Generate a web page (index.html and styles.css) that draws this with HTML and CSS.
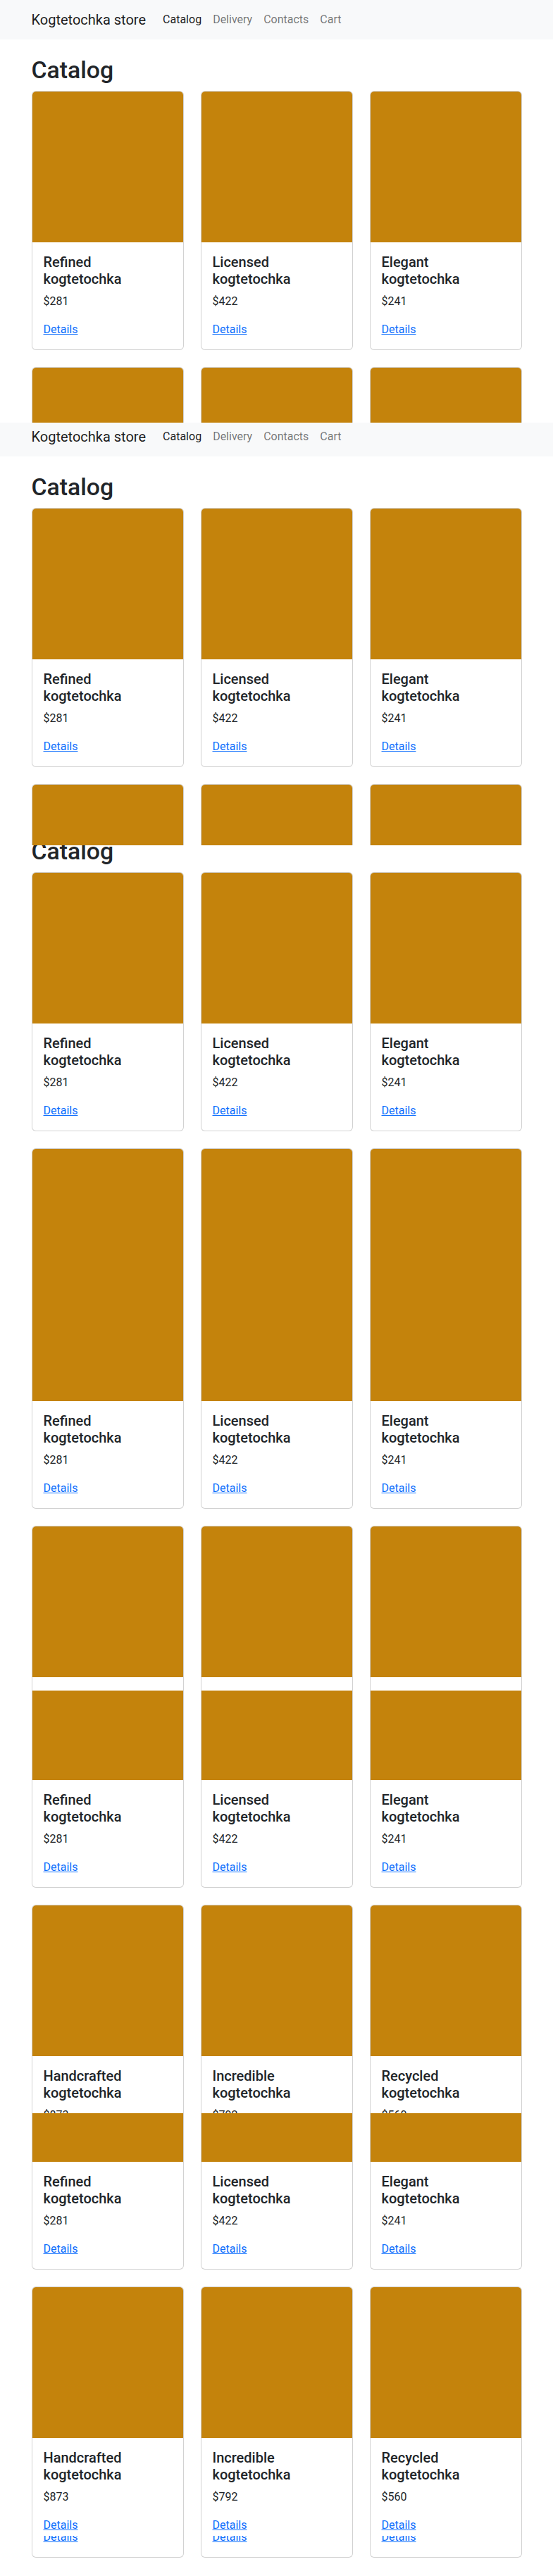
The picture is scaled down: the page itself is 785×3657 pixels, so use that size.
FILE: index.html
```html
<!DOCTYPE html>
<html lang="en">
<head>
<meta charset="utf-8">
<title>Kogtetochka store</title>
<link rel="stylesheet" href="styles.css">
</head>
<body>

<!-- capture 1 -->
<div class="shot shot--600">
  <nav class="navbar">
    <div class="container navbar-inner">
      <a class="brand" href="#">Kogtetochka store</a>
      <ul class="nav">
        <li><a class="nav-link nav-link--active" href="#">Catalog</a></li>
        <li><a class="nav-link" href="#">Delivery</a></li>
        <li><a class="nav-link" href="#">Contacts</a></li>
        <li><a class="nav-link" href="#">Cart</a></li>
      </ul>
    </div>
  </nav>
  <main class="container main">
    <h1 class="page-title">Catalog</h1>
    <div class="grid">
      <div class="card"><div class="card-img"></div><div class="card-body"><h5 class="card-title">Refined kogtetochka</h5><p class="card-text">$281</p><a class="card-link" href="#">Details</a></div></div>
      <div class="card"><div class="card-img"></div><div class="card-body"><h5 class="card-title">Licensed kogtetochka</h5><p class="card-text">$422</p><a class="card-link" href="#">Details</a></div></div>
      <div class="card"><div class="card-img"></div><div class="card-body"><h5 class="card-title">Elegant kogtetochka</h5><p class="card-text">$241</p><a class="card-link" href="#">Details</a></div></div>
      <div class="card"><div class="card-img"></div><div class="card-body"><h5 class="card-title">Handcrafted kogtetochka</h5><p class="card-text">$873</p><a class="card-link" href="#">Details</a></div></div>
      <div class="card"><div class="card-img"></div><div class="card-body"><h5 class="card-title">Incredible kogtetochka</h5><p class="card-text">$792</p><a class="card-link" href="#">Details</a></div></div>
      <div class="card"><div class="card-img"></div><div class="card-body"><h5 class="card-title">Recycled kogtetochka</h5><p class="card-text">$560</p><a class="card-link" href="#">Details</a></div></div>
    </div>
  </main>
</div>

<!-- capture 2 -->
<div class="shot shot--600">
  <div class="page page--b">
    <nav class="navbar">
      <div class="container navbar-inner">
        <a class="brand" href="#">Kogtetochka store</a>
        <ul class="nav">
          <li><a class="nav-link nav-link--active" href="#">Catalog</a></li>
          <li><a class="nav-link" href="#">Delivery</a></li>
          <li><a class="nav-link" href="#">Contacts</a></li>
          <li><a class="nav-link" href="#">Cart</a></li>
        </ul>
      </div>
    </nav>
    <main class="container main">
      <h1 class="page-title">Catalog</h1>
      <div class="grid">
        <div class="card"><div class="card-img"></div><div class="card-body"><h5 class="card-title">Refined kogtetochka</h5><p class="card-text">$281</p><a class="card-link" href="#">Details</a></div></div>
        <div class="card"><div class="card-img"></div><div class="card-body"><h5 class="card-title">Licensed kogtetochka</h5><p class="card-text">$422</p><a class="card-link" href="#">Details</a></div></div>
        <div class="card"><div class="card-img"></div><div class="card-body"><h5 class="card-title">Elegant kogtetochka</h5><p class="card-text">$241</p><a class="card-link" href="#">Details</a></div></div>
        <div class="card"><div class="card-img"></div><div class="card-body"><h5 class="card-title">Handcrafted kogtetochka</h5><p class="card-text">$873</p><a class="card-link" href="#">Details</a></div></div>
        <div class="card"><div class="card-img"></div><div class="card-body"><h5 class="card-title">Incredible kogtetochka</h5><p class="card-text">$792</p><a class="card-link" href="#">Details</a></div></div>
        <div class="card"><div class="card-img"></div><div class="card-body"><h5 class="card-title">Recycled kogtetochka</h5><p class="card-text">$560</p><a class="card-link" href="#">Details</a></div></div>
      </div>
    </main>
  </div>
</div>

<!-- capture 3 -->
<div class="shot shot--1200">
  <div class="page page--c">
    <nav class="navbar">
      <div class="container navbar-inner">
        <a class="brand" href="#">Kogtetochka store</a>
        <ul class="nav">
          <li><a class="nav-link nav-link--active" href="#">Catalog</a></li>
          <li><a class="nav-link" href="#">Delivery</a></li>
          <li><a class="nav-link" href="#">Contacts</a></li>
          <li><a class="nav-link" href="#">Cart</a></li>
        </ul>
      </div>
    </nav>
    <main class="container main">
      <h1 class="page-title">Catalog</h1>
      <div class="grid">
        <div class="card"><div class="card-img"></div><div class="card-body"><h5 class="card-title">Refined kogtetochka</h5><p class="card-text">$281</p><a class="card-link" href="#">Details</a></div></div>
        <div class="card"><div class="card-img"></div><div class="card-body"><h5 class="card-title">Licensed kogtetochka</h5><p class="card-text">$422</p><a class="card-link" href="#">Details</a></div></div>
        <div class="card"><div class="card-img"></div><div class="card-body"><h5 class="card-title">Elegant kogtetochka</h5><p class="card-text">$241</p><a class="card-link" href="#">Details</a></div></div>
        <div class="card"><div class="card-img card-img--tall"></div><div class="card-body"><h5 class="card-title">Refined kogtetochka</h5><p class="card-text">$281</p><a class="card-link" href="#">Details</a></div></div>
        <div class="card"><div class="card-img card-img--tall"></div><div class="card-body"><h5 class="card-title">Licensed kogtetochka</h5><p class="card-text">$422</p><a class="card-link" href="#">Details</a></div></div>
        <div class="card"><div class="card-img card-img--tall"></div><div class="card-body"><h5 class="card-title">Elegant kogtetochka</h5><p class="card-text">$241</p><a class="card-link" href="#">Details</a></div></div>
        <div class="card"><div class="card-img"></div><div class="card-body"><h5 class="card-title">Handcrafted kogtetochka</h5><p class="card-text">$873</p><a class="card-link" href="#">Details</a></div></div>
        <div class="card"><div class="card-img"></div><div class="card-body"><h5 class="card-title">Incredible kogtetochka</h5><p class="card-text">$792</p><a class="card-link" href="#">Details</a></div></div>
        <div class="card"><div class="card-img"></div><div class="card-body"><h5 class="card-title">Recycled kogtetochka</h5><p class="card-text">$560</p><a class="card-link" href="#">Details</a></div></div>
      </div>
    </main>
  </div>
</div>

<!-- capture 4 -->
<div class="shot shot--600">
  <div class="container grid grid--d">
    <div class="card"><div class="card-img"></div><div class="card-body"><h5 class="card-title">Refined kogtetochka</h5><p class="card-text">$281</p><a class="card-link" href="#">Details</a></div></div>
    <div class="card"><div class="card-img"></div><div class="card-body"><h5 class="card-title">Licensed kogtetochka</h5><p class="card-text">$422</p><a class="card-link" href="#">Details</a></div></div>
    <div class="card"><div class="card-img"></div><div class="card-body"><h5 class="card-title">Elegant kogtetochka</h5><p class="card-text">$241</p><a class="card-link" href="#">Details</a></div></div>
    <div class="card"><div class="card-img"></div><div class="card-body"><h5 class="card-title">Handcrafted kogtetochka</h5><p class="card-text">$873</p><a class="card-link" href="#">Details</a></div></div>
    <div class="card"><div class="card-img"></div><div class="card-body"><h5 class="card-title">Incredible kogtetochka</h5><p class="card-text">$792</p><a class="card-link" href="#">Details</a></div></div>
    <div class="card"><div class="card-img"></div><div class="card-body"><h5 class="card-title">Recycled kogtetochka</h5><p class="card-text">$560</p><a class="card-link" href="#">Details</a></div></div>
  </div>
</div>

<!-- capture 5 -->
<div class="shot shot--600">
  <div class="container grid grid--e">
    <div class="card"><div class="card-img"></div><div class="card-body"><h5 class="card-title">Refined kogtetochka</h5><p class="card-text">$281</p><a class="card-link" href="#">Details</a></div></div>
    <div class="card"><div class="card-img"></div><div class="card-body"><h5 class="card-title">Licensed kogtetochka</h5><p class="card-text">$422</p><a class="card-link" href="#">Details</a></div></div>
    <div class="card"><div class="card-img"></div><div class="card-body"><h5 class="card-title">Elegant kogtetochka</h5><p class="card-text">$241</p><a class="card-link" href="#">Details</a></div></div>
    <div class="card"><div class="card-img"></div><div class="card-body"><h5 class="card-title">Handcrafted kogtetochka</h5><p class="card-text">$873</p><a class="card-link" href="#">Details</a></div></div>
    <div class="card"><div class="card-img"></div><div class="card-body"><h5 class="card-title">Incredible kogtetochka</h5><p class="card-text">$792</p><a class="card-link" href="#">Details</a></div></div>
    <div class="card"><div class="card-img"></div><div class="card-body"><h5 class="card-title">Recycled kogtetochka</h5><p class="card-text">$560</p><a class="card-link" href="#">Details</a></div></div>
  </div>
</div>

<!-- capture 6 -->
<div class="shot shot--end">
  <div class="container grid grid--f">
    <div class="card"><div class="card-img"></div><div class="card-body"><h5 class="card-title">Handcrafted kogtetochka</h5><p class="card-text">$873</p><a class="card-link" href="#">Details</a></div></div>
    <div class="card"><div class="card-img"></div><div class="card-body"><h5 class="card-title">Incredible kogtetochka</h5><p class="card-text">$792</p><a class="card-link" href="#">Details</a></div></div>
    <div class="card"><div class="card-img"></div><div class="card-body"><h5 class="card-title">Recycled kogtetochka</h5><p class="card-text">$560</p><a class="card-link" href="#">Details</a></div></div>
  </div>
</div>

</body>
</html>
```

FILE: styles.css
```css
*,
*::before,
*::after {
  box-sizing: border-box;
}

html,
body {
  margin: 0;
  padding: 0;
}

body {
  font-family: Roboto, "Liberation Sans", Arial, sans-serif;
  font-size: 16px;
  line-height: 1.5;
  color: #212529;
  background: #fff;
}

/* stitched viewport captures */
.shot {
  overflow: hidden;
}
.shot--600 {
  height: 600px;
}
.shot--1200 {
  height: 1200px;
}
.shot--end {
  height: 57px;
}

.page--b {
  margin-top: -8px;
}
.page--c {
  margin-top: -91px;
}

.container {
  width: 720px;
  margin-left: auto;
  margin-right: auto;
  padding-left: 12px;
  padding-right: 12px;
}

/* navbar */
.navbar {
  background: #f8f9fa;
  padding: 8px 0;
}
.navbar-inner {
  display: flex;
  align-items: center;
}
.brand {
  font-size: 20px;
  line-height: 30px;
  padding: 5px 0;
  margin-right: 16px;
  color: rgba(0, 0, 0, 0.9);
  text-decoration: none;
  white-space: nowrap;
}
.nav {
  display: flex;
  list-style: none;
  margin: 0;
  padding: 0;
}
.nav-link {
  display: block;
  padding: 8px;
  line-height: 24px;
  color: rgba(0, 0, 0, 0.55);
  text-decoration: none;
}
.nav-link--active {
  color: rgba(0, 0, 0, 0.9);
}

/* main */
.main {
  margin-top: 24px;
}
.page-title {
  font-size: calc(1.375rem + 1.5vw);
  font-weight: 500;
  line-height: 1.2;
  margin: 0 0 8px;
}

.grid {
  display: grid;
  grid-template-columns: repeat(3, 1fr);
  gap: 24px;
}
.grid--d {
  margin-top: -88px;
}
.grid--e {
  margin-top: -146px;
}
.grid--f {
  margin-top: -337px;
}

/* cards */
.card {
  background: #fff;
  border: 1px solid rgba(0, 0, 0, 0.175);
  border-radius: 6px;
  overflow: hidden;
}
.card-img {
  height: 214px;
  background: #c4830c;
}
.card-img--tall {
  height: 358px;
}
.card-body {
  padding: 16px;
}
.card-title {
  font-size: 20px;
  font-weight: 500;
  line-height: 1.2;
  margin: 0 0 8px;
  width: min-content;
}
.card-text {
  margin: 0 0 16px;
}
.card-link {
  color: #0d6efd;
  text-decoration: underline;
}
```
